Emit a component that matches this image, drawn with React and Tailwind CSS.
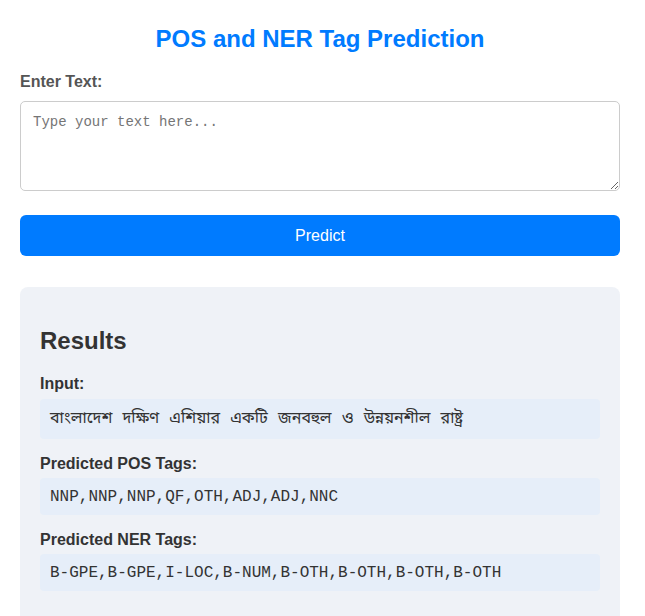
import React from "react";

export default function App() {
  return (
    <div className="min-h-screen bg-white font-['Liberation_Sans',Arial,sans-serif] text-[#333]">
      <div className="w-[600px] ml-[20px] pt-[25px]">
        <h1 className="text-center text-[24px] leading-[28px] font-bold text-[#007bff]">
          POS and NER Tag Prediction
        </h1>
        <label className="block mt-[20px] text-[16px] leading-[18px] font-bold text-[#555]">
          Enter Text:
        </label>
        <textarea
          className="block mt-[10px] w-[600px] h-[90px] border border-[#ccc] rounded-[5px] px-[12px] py-[12px] text-[14px] leading-[16px] font-['Liberation_Mono',monospace] placeholder:text-[#757575] bg-white"
          placeholder="Type your text here..."
        />
        <button className="block mt-[24px] w-[600px] h-[41px] rounded-[6px] bg-[#007bff] text-white text-[16px]">
          Predict
        </button>
        <div className="mt-[31px] rounded-[8px] bg-[#eff2f7] px-[20px] pt-[40px] pb-[40px]">
          <h2 className="text-[24px] leading-[28px] font-bold text-[#333]">Results</h2>
          <div className="mt-[20px] font-bold text-[16px] leading-[18px]">Input:</div>
          <div className="mt-[6px] rounded-[4px] bg-[#e6eef9] px-[10px] h-[40px] flex items-center text-[16px] [word-spacing:6px] font-['Noto_Sans_Bengali','Lohit_Bengali','FreeSans',sans-serif]">
            বাংলাদেশ দক্ষিণ এশিয়ার একটি জনবহুল ও উন্নয়নশীল রাষ্ট্র
          </div>
          <div className="mt-[16px] font-bold text-[16px] leading-[18px]">Predicted POS Tags:</div>
          <div className="mt-[5px] rounded-[4px] bg-[#e6eef9] px-[10px] h-[37px] flex items-center text-[16px] font-['Liberation_Mono',monospace]">
            NNP,NNP,NNP,QF,OTH,ADJ,ADJ,NNC
          </div>
          <div className="mt-[16px] font-bold text-[16px] leading-[18px]">Predicted NER Tags:</div>
          <div className="mt-[5px] rounded-[4px] bg-[#e6eef9] px-[10px] h-[37px] flex items-center text-[16px] font-['Liberation_Mono',monospace]">
            B-GPE,B-GPE,I-LOC,B-NUM,B-OTH,B-OTH,B-OTH,B-OTH
          </div>
        </div>
      </div>
    </div>
  );
}
